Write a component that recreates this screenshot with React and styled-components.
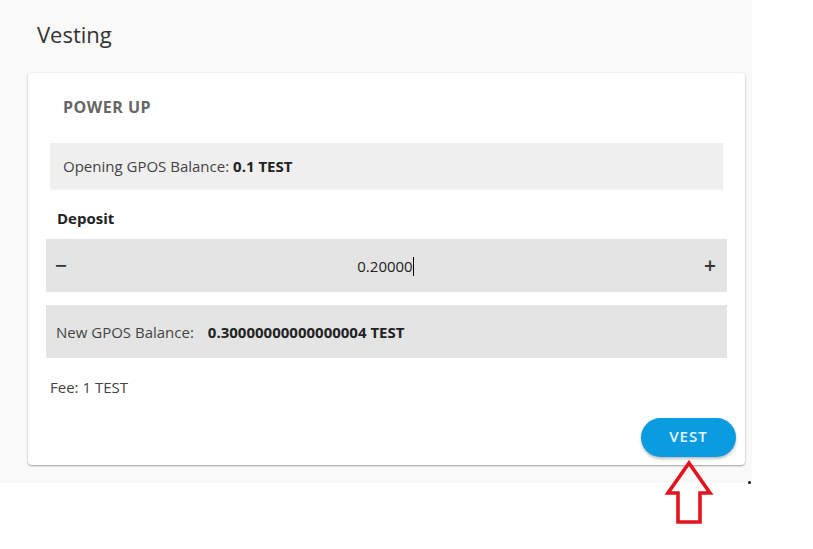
import React from "react";
import styled, { createGlobalStyle } from "styled-components";

const Global = createGlobalStyle`
  html, body { margin: 0; padding: 0; background: #ffffff; }
  body { font-family: "Open Sans", "Liberation Sans", sans-serif; color: #333; }
  * { box-sizing: border-box; }
`;

const Stage = styled.div`
  position: relative;
  width: 813px;
  height: 549px;
`;

const Page = styled.div`
  width: 752px;
  height: 483px;
  background: #f9f9f9;
  padding: 18px 0 0 28px;
  display: flex;
  flex-direction: column;
`;

const Title = styled.h1`
  margin: 0 0 23px 9px;
  font-size: 22px;
  font-weight: 400;
  line-height: 32px;
  color: #333;
`;

const Card = styled.section`
  width: 717px;
  height: 392px;
  background: #fff;
  border-radius: 4px;
  box-shadow: 0 1px 2px rgba(0, 0, 0, 0.35), 0 0 3px rgba(0, 0, 0, 0.06);
  padding: 22px 18px 0 18px;
  display: flex;
  flex-direction: column;
`;

const CardTitle = styled.h2`
  margin: 0 0 24px 17px;
  font-size: 16px;
  font-weight: 700;
  letter-spacing: 0.5px;
  line-height: 24px;
  color: #666;
`;

const InfoBox = styled.div`
  margin: 0 4px 0 4px;
  height: 46px;
  background: #efefef;
  display: flex;
  align-items: center;
  padding-left: 13px;
  font-size: 15px;
  color: #444;
  box-shadow: 0 1px 2px rgba(0, 0, 0, 0.05);
`;

const Strong = styled.b`
  font-weight: 700;
  color: #222;
  margin-left: ${(p) => p.$gap || 4}px;
`;

const Label = styled.div`
  margin: 18px 0 10px 11px;
  font-size: 15px;
  font-weight: 700;
  line-height: 22px;
  color: #222;
`;

const Stepper = styled.div`
  height: 53px;
  background: #e4e4e4;
  display: flex;
  align-items: center;
  padding: 0 10px 0 8px;
`;

const StepButton = styled.span`
  width: 14px;
  font-size: 21px;
  font-weight: 600;
  color: #333;
  line-height: 1;
  display: flex;
  justify-content: center;
`;

const Value = styled.div`
  flex: 1;
  text-align: center;
  font-size: 15px;
  color: #222;
`;

const Caret = styled.span`
  display: inline-block;
  width: 1px;
  height: 19px;
  background: #000;
  vertical-align: -4px;
`;

const ResultRow = styled.div`
  margin-top: 13px;
  height: 53px;
  background: #e4e4e4;
  display: flex;
  align-items: center;
  padding-left: 10px;
  font-size: 15px;
  color: #444;
`;

const Fee = styled.div`
  margin: 19px 0 0 4px;
  font-size: 15px;
  color: #444;
  line-height: 20px;
`;

const Actions = styled.div`
  display: flex;
  justify-content: flex-end;
  margin: 21px -9px 0 0;
`;

const VestButton = styled.button`
  width: 95px;
  height: 39px;
  border: none;
  border-radius: 20px;
  background: #0b9ce0;
  color: #e8f7ff;
  font-family: "Open Sans", "Liberation Sans", sans-serif;
  font-size: 15px;
  font-weight: 600;
  letter-spacing: 1px;
  line-height: 36px;
  padding: 0 0 3px;
  box-shadow: 0 2px 3px rgba(0, 0, 0, 0.25);
  cursor: pointer;
`;

const Arrow = styled.svg`
  position: absolute;
  left: 664px;
  top: 460px;
`;

const Dot = styled.span`
  position: absolute;
  left: 748px;
  top: 481px;
  width: 3px;
  height: 3px;
  border-radius: 50%;
  background: #111;
`;

export default function App() {
  return (
    <>
      <Global />
      <Stage>
        <Page>
          <Title>Vesting</Title>
          <Card>
            <CardTitle>POWER UP</CardTitle>
            <InfoBox>
              Opening GPOS Balance:<Strong>0.1 TEST</Strong>
            </InfoBox>
            <Label>Deposit</Label>
            <Stepper>
              <StepButton>−</StepButton>
              <Value>
                0.20000<Caret />
              </Value>
              <StepButton>+</StepButton>
            </Stepper>
            <ResultRow>
              New GPOS Balance:<Strong $gap={14}>0.30000000000000004 TEST</Strong>
            </ResultRow>
            <Fee>Fee: 1 TEST</Fee>
            <Actions>
              <VestButton>VEST</VestButton>
            </Actions>
          </Card>
        </Page>
        <Arrow width="52" height="66" viewBox="0 0 52 66">
          <path
            d="M25 3 L46 33 L36 33 L36 62 L14 62 L14 33 L4 33 Z"
            fill="none"
            stroke="#e3141c"
            strokeWidth="3.6"
            strokeLinejoin="miter"
          />
        </Arrow>
        <Dot />
      </Stage>
    </>
  );
}
